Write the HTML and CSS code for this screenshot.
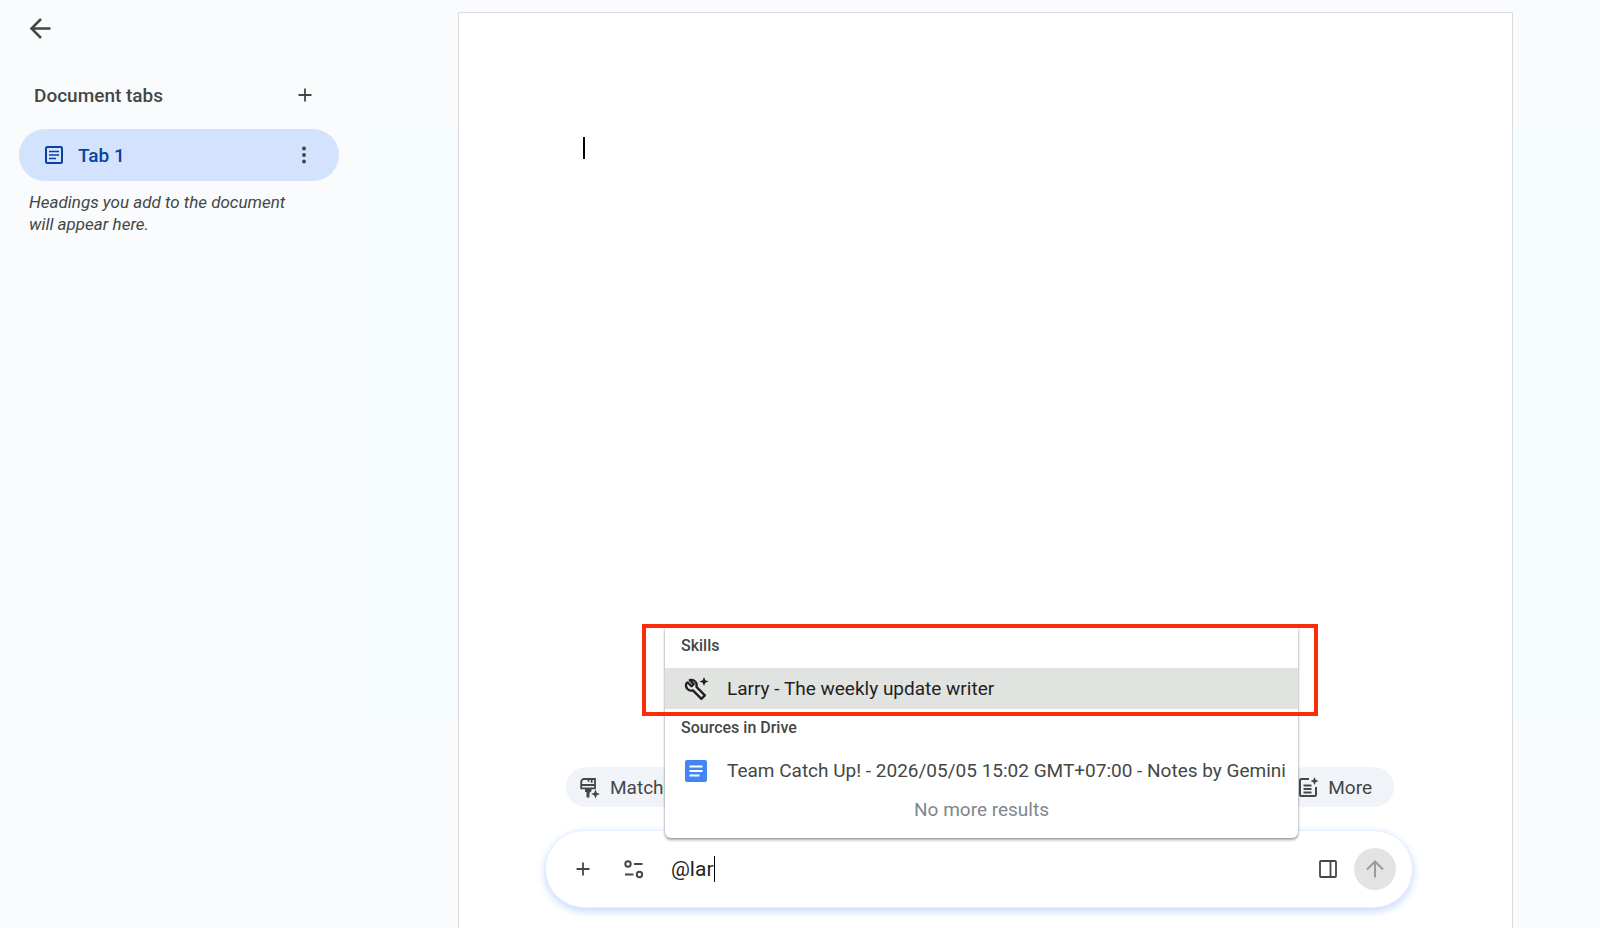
FILE: index.html
```html
<!DOCTYPE html>
<html lang="en">
<head>
    <meta charset="UTF-8">
    <meta name="viewport" content="width=device-width, initial-scale=1.0">
    <title>Untitled document</title>
    <link rel="stylesheet" href="styles.css">
</head>
<body>
    <aside class="sidebar">
        <button class="icon-btn" aria-label="Close tabs panel">
            <svg class="icon" viewBox="0 0 24 24" fill="none" stroke="currentColor" stroke-width="2.5"><path d="M22.500 12.500H4M13 3L3.500 12.500 13 22"/></svg>
        </button>
        <div class="sidebar-header">
            <h2>Document tabs</h2>
            <button class="icon-btn" aria-label="Add tab">
                <svg class="icon" viewBox="0 0 24 24" fill="none" stroke="currentColor" stroke-width="1.8"><path d="M12 5.500v13M5.500 12h13"/></svg>
            </button>
        </div>
        <div class="tab">
            <a href="#tab1" class="tab-link">
                <svg class="icon" viewBox="0 0 24 24" fill="none" stroke="currentColor" stroke-width="2"><rect x="4" y="4" width="16" height="16" rx="1.500"/><path d="M7 8.500h10M7 12h10M7 15.500h7" stroke-width="1.700"/></svg>
                Tab 1
            </a>
            <button class="icon-btn" aria-label="Tab options">
                <svg class="icon" viewBox="0 0 24 24" fill="currentColor"><circle cx="12" cy="5.500" r="2"/><circle cx="12" cy="12" r="2"/><circle cx="12" cy="18.500" r="2"/></svg>
            </button>
        </div>
        <p class="hint">Headings you add to the document will appear here.</p>
    </aside>

    <main class="workspace">
        <div class="page">
            <div class="document" contenteditable="true" role="textbox" aria-label="Document content"><span class="caret"></span></div>

            <div class="assist">
                <div class="chips">
                    <button class="chip chip-match">
                        <svg class="icon" viewBox="0 0 24 24" fill="none" stroke="currentColor" stroke-width="1.800"><path d="M17 13.300V4H6a2.800 2.800 0 0 0-2.800 2.800v6.500H17zM3.200 10H17M10.500 4v2.800M13.700 4v3.800"/><path d="M7 13h6.500v3L11.500 18v4.500H8.500V17H7z" fill="currentColor" stroke="none"/><path d="M17.500 14.500l1.300 3.200 3.200 1.300-3.200 1.300-1.300 3.200-1.300-3.200L13 19l3.200-1.300z" fill="currentColor" stroke="none"/></svg>
                        Match
                    </button>
                    <button class="chip">
                        <svg class="icon" viewBox="0 0 24 24" fill="none" stroke="currentColor" stroke-width="2"><path d="M13 4H5.500A1.500 1.500 0 0 0 4 5.500v14A1.500 1.500 0 0 0 5.500 21h13a1.500 1.500 0 0 0 1.500-1.500V12M7.500 10.500h8M7.500 14h8M7.500 17.500h8"/><path d="M18.500 2l1.200 2.800L22.500 6l-2.800 1.200L18.500 10l-1.200-2.800L14.500 6l2.800-1.200z" fill="currentColor" stroke="none"/></svg>
                        More
                    </button>
                </div>

                <form class="composer">
                    <button type="button" class="icon-btn" aria-label="Add source">
                        <svg class="icon" viewBox="0 0 24 24" fill="none" stroke="currentColor" stroke-width="1.800"><path d="M12 5.500v13M5.500 12h13"/></svg>
                    </button>
                    <button type="button" class="icon-btn" aria-label="Settings">
                        <svg class="icon" viewBox="0 0 24 24" fill="none" stroke="currentColor" stroke-width="2"><circle cx="7" cy="7" r="2.700"/><path d="M13 7h8.500M4 17.500h8.500"/><circle cx="18.500" cy="17.500" r="2.700"/></svg>
                    </button>
                    <div class="prompt">
                        <input type="text" class="prompt-input" aria-label="Prompt" value="@lar" size="3" autocomplete="off">
                        <span class="caret caret-thin"></span>
                    </div>
                    <button type="button" class="icon-btn" aria-label="Open side panel">
                        <svg class="icon" viewBox="0 0 24 24" fill="none" stroke="currentColor" stroke-width="1.800"><rect x="4" y="4" width="16" height="16" rx="1"/><path d="M14.500 4v16"/></svg>
                    </button>
                    <button type="submit" class="send" aria-label="Send">
                        <svg class="icon" viewBox="0 0 24 24" fill="none" stroke="currentColor" stroke-width="2"><path d="M12 20.500V4.500M4 12.500l8-8 8 8"/></svg>
                    </button>

                    <div class="mentions">
                        <h3>Skills</h3>
                        <button type="button" class="mention active">
                            <svg class="icon" viewBox="0 0 24 24"><path d="M3.500 5.300l4 4 2.200-2.200-4-4a5.300 5.300 0 0 1 6.700 6.800l8.500 8.500-3.500 3.500-8.500-8.500A5.300 5.300 0 0 1 2.300 6.500z" fill="none" stroke="currentColor" stroke-width="2.200" stroke-linejoin="round"/><path d="M20 0l1.300 3.200L24.500 4.500l-3.200 1.300L20 9l-1.300-3.200-3.200-1.300 3.200-1.300z" fill="currentColor"/></svg>
                            Larry - The weekly update writer
                        </button>
                        <h3>Sources in Drive</h3>
                        <button type="button" class="mention">
                            <svg class="icon" viewBox="0 0 24 24"><rect x="1" y="1" width="22" height="22" rx="2" fill="#4285f4"/><path d="M5.500 7.500h13M5.500 12h13M5.500 16.500h10" stroke="#fff" stroke-width="2.200"/></svg>
                            Team Catch Up! - 2026/05/05 15:02 GMT+07:00 - Notes by Gemini
                        </button>
                        <p class="no-more">No more results</p>
                        <div class="highlight"></div>
                    </div>
                </form>
            </div>
        </div>
    </main>

    <script>
        document.querySelector(".composer").addEventListener("submit", function(e){
            e.preventDefault();
        });
    </script>
</body>
</html>
```

FILE: styles.css
```css
* {
    box-sizing: border-box;
}

body {
    display: flex;
    min-height: 100vh;
    margin: 0;
    font-family: Roboto, "Liberation Sans", sans-serif;
    font-size: 19px;
    color: #444746;
    background-color: #f9fbfd;
}

h2, h3, p {
    margin: 0;
}

button {
    border: none;
    padding: 0;
    background: none;
    font: inherit;
    color: inherit;
    cursor: pointer;
}

.icon {
    display: block;
    flex: none;
    width: 24px;
    height: 24px;
    overflow: visible;
}

.icon-btn {
    display: block;
    flex: none;
}

/* left panel */
.sidebar {
    flex: none;
    width: 360px;
    padding: 16px 21px 0 19px;
}

.sidebar > .icon-btn {
    margin-left: 9px;
}

.sidebar-header {
    display: flex;
    align-items: center;
    justify-content: space-between;
    height: 24px;
    margin: 43px 0 22px;
    padding: 0 22px 0 15px;
}

.sidebar-header h2 {
    font-size: 19px;
    font-weight: 500;
}

.tab {
    display: flex;
    align-items: center;
    height: 52px;
    padding: 0 23px;
    border-radius: 26px;
    background-color: #d3e3fd;
}

.tab-link {
    display: flex;
    flex: 1;
    align-items: center;
    gap: 12px;
    font-weight: 500;
    color: #0842a0;
    text-decoration: none;
}

.hint {
    padding: 10px 40px 0 10px;
    font-size: 17px;
    font-style: italic;
    line-height: 22px;
}

/* document */
.workspace {
    display: flex;
    flex: 1;
    padding: 12px 87px 0 98px;
    background: linear-gradient(#f6fbfd, #f6fbfd) 0 128px / 100% 592px no-repeat;
}

.page {
    display: flex;
    flex: 1;
    flex-direction: column;
    border: 1px solid #dadce0;
    border-bottom: none;
    background-color: #fff;
}

.document {
    flex: 1;
    padding: 124px 124px 0;
    outline: none;
}

.caret {
    display: block;
    width: 2px;
    height: 22px;
    background-color: #000;
}

.assist {
    padding: 0 100px 21px 87px;
}

.chips {
    display: flex;
    justify-content: space-between;
    margin: 0 18px 24px 20px;
}

.chip {
    display: flex;
    align-items: center;
    gap: 8px;
    height: 40px;
    padding: 0 22px 0 12px;
    border-radius: 20px;
    background-color: #f0f4f9;
}

.chip-match {
    min-width: 160px;
}

/* prompt bar */
.composer {
    position: relative;
    display: flex;
    align-items: center;
    gap: 26px;
    height: 76px;
    padding: 0 16px 0 25px;
    border-radius: 38px;
    background-color: #fff;
    box-shadow: 0 0 0 1px #e8f0fe, 0 3px 8px 1px #c2d7fc;
}

.prompt {
    display: flex;
    flex: 1;
    align-items: center;
}

.prompt-input {
    field-sizing: content;
    border: none;
    padding: 0;
    outline: none;
    background: none;
    font: inherit;
    font-size: 21px;
    color: #1f1f1f;
}

.caret-thin {
    width: 1px;
    height: 26px;
}

.send {
    display: flex;
    align-items: center;
    justify-content: center;
    width: 42px;
    height: 42px;
    margin-left: -12px;
    border-radius: 50%;
    background-color: #e3e3e3;
    color: #9a9a9a;
}

/* @ menu, opens over the prompt bar */
.mentions {
    position: absolute;
    right: 114px;
    bottom: 69px;
    left: 119px;
    padding-bottom: 10px;
    border-radius: 0 0 6px 6px;
    background-color: #fff;
    box-shadow: 0 2px 3px rgba(0, 0, 0, 0.35), 0 0 2px rgba(0, 0, 0, 0.25);
}

.mentions h3 {
    padding-left: 16px;
    margin-bottom: 4px;
    font-size: 16px;
    font-weight: 500;
    line-height: 36px;
}

.mention {
    display: flex;
    align-items: center;
    gap: 19px;
    width: 100%;
    height: 41px;
    margin-bottom: 1px;
    padding: 0 19px;
    text-align: left;
    white-space: nowrap;
}

.mention.active {
    background-color: #e1e3e1;
    color: #1f1f1f;
}

.no-more {
    line-height: 36px;
    text-align: center;
    color: #80868b;
}

.highlight {
    position: absolute;
    top: -4px;
    right: -20px;
    left: -23px;
    height: 92px;
    border: 4px solid #fc2c08;
    pointer-events: none;
}
```
